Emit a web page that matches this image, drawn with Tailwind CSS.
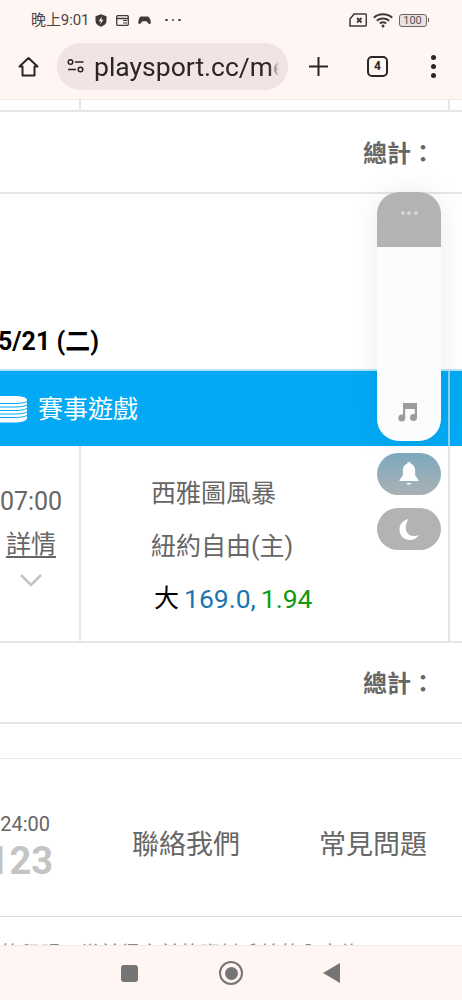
<!DOCTYPE html>
<html lang="zh-Hant">
<head>
    <meta charset="UTF-8">
    <meta name="viewport" content="width=device-width, initial-scale=1.0">
    <title>playsport.cc</title>
    <script src="https://cdn.jsdelivr.net/npm/@tailwindcss/browser@4"></script>
</head>
<body class="bg-white font-['Roboto','Noto_Sans_CJK_TC',sans-serif] text-[#666]">
<div class="relative w-[462px] h-[1000px] overflow-hidden flex flex-col">

    <!-- status bar + browser toolbar -->
    <header class="h-[100px] shrink-0 bg-[#fff5f3] border-b border-[#f0e8e6]">
        <div class="h-[40px] flex items-center pl-[31px] pr-[33px] text-[#4a4443]">
            <span class="text-[15px] tracking-[-0.1px]">晚上9:01</span>
            <svg class="ml-[6px] w-[12px] h-[13px]" viewBox="0 0 12 13"><path d="M6 .2 11.500 2.200V7c0 2.800-2.400 4.800-5.500 5.800C2.900 11.800.5 9.800.5 7V2.200Z" fill="#3f3a39"/><path d="M6.800 2.500 3.800 7.200h2l-.5 3.300 3-4.800h-2Z" fill="#fff5f3"/></svg>
            <svg class="ml-[9px] w-[13px] h-[11px]" viewBox="0 0 13 11" fill="none" stroke="#3f3a39"><rect x=".7" y=".7" width="11.600" height="9.600" rx="1" stroke-width="1.300"/><path d="M1 3.500h11" stroke-width="1.500"/><path d="M7 5.500h4M7 8h4" stroke-width="1"/></svg>
            <svg class="ml-[9px] w-[13px] h-[9px]" viewBox="0 0 13 9"><path d="M3 .5h6.500C11 .5 12.500 3 12.800 6.500c.1 1.500-1.300 2-2.200 1L8.500 5.300h-4L2.500 7.500c-1 1-2.400.3-2.200-1C.7 3 1.500.5 3 .5Z" fill="#3f3a39"/></svg>
            <span class="ml-[14px] flex gap-[4px]"><i class="w-[2.500px] h-[2.500px] rounded-full bg-[#4a4443]"></i><i class="w-[2.500px] h-[2.500px] rounded-full bg-[#4a4443]"></i><i class="w-[2.500px] h-[2.500px] rounded-full bg-[#4a4443]"></i></span>
            <svg class="ml-auto w-[18px] h-[14px]" viewBox="0 0 18 14" fill="none" stroke="#3f3a39" stroke-width="1.500"><path d="M5 1h11.500a.8.8 0 0 1 .8.8v10.400a.8.8 0 0 1-.8.8H1V6Z"/><path d="M8 5l4.500 4.500M12.500 5 8 9.500" stroke-width="1.800"/></svg>
            <svg class="ml-[6px] w-[20px] h-[15px]" viewBox="0 0 20 15" fill="none" stroke="#3f3a39" stroke-width="2"><path d="M.8 4.800C5.800.2 14.200.2 19.200 4.800"/><path d="M3.800 7.700c3.500-3 8.900-3 12.400 0"/><path d="M6.800 10.500c2-1.500 4.400-1.500 6.400 0"/><circle cx="10" cy="13" r="1.500" fill="#3f3a39" stroke="none"/></svg>
            <div class="ml-[6px] flex items-center">
                <span class="w-[28px] h-[13px] rounded-[3px] border border-[#6b6564] text-[11px] leading-[11px] text-center text-[#5a5453] bg-[#e9e2e0]">100</span>
                <i class="w-[1.500px] h-[4px] ml-px bg-[#5a5453]"></i>
            </div>
        </div>
        <div class="h-[52px] flex items-center">
            <svg class="ml-[18px] w-[21px] h-[21px]" viewBox="0 0 21 21" fill="none" stroke="#2b2524" stroke-width="2" stroke-linejoin="round"><path d="M10.500 2 1.500 10.500h3V19.500h12V10.500h3Z"/></svg>
            <div class="ml-[18px] w-[231px] h-[47px] rounded-full bg-[#f2e4e2] flex items-center pl-[10px] overflow-hidden">
                <svg class="w-[18px] h-[14px] shrink-0" viewBox="0 0 18 14" fill="none" stroke="#2b2524" stroke-width="1.500"><circle cx="3.500" cy="3" r="2.300"/><path d="M8 3h8.500M1 10.500h8"/><circle cx="13.500" cy="10.500" r="2.300"/></svg>
                <div class="ml-[9px] w-[185px] overflow-hidden whitespace-nowrap text-[26.5px] text-[#2b2524] leading-[47px] [mask-image:linear-gradient(to_left,transparent,black_10px)]">playsport.cc/member</div>
            </div>
            <svg class="ml-[21px] w-[19px] h-[19px]" viewBox="0 0 19 19" stroke="#2b2524" stroke-width="2"><path d="M9.500 0v19M0 9.500h19"/></svg>
            <div class="ml-[39px] w-[21px] h-[21px] rounded-[5px] border-2 border-[#2b2524] text-[#2b2524] text-[12px] font-bold leading-[17px] text-center">4</div>
            <div class="ml-[43px] flex flex-col gap-[4px]"><i class="w-[5px] h-[5px] rounded-full bg-[#2b2524]"></i><i class="w-[5px] h-[5px] rounded-full bg-[#2b2524]"></i><i class="w-[5px] h-[5px] rounded-full bg-[#2b2524]"></i></div>
        </div>
    </header>

    <!-- end of previous table row -->
    <div class="h-[12px] shrink-0 flex border-b-2 border-[#e6e6e6]">
        <div class="w-[81px] border-r-2 border-[#e6e6e6]"></div>
        <div class="w-[369px] border-r-2 border-[#e6e6e6]"></div>
    </div>

    <div class="h-[82px] shrink-0 flex items-center justify-end pr-[27px] pt-[4px] border-b-2 border-[#e6e6e6] text-[24px] font-bold text-[#666]">總計：</div>

    <div class="h-[175px] shrink-0 flex items-end pb-[13px] text-[25px] font-bold text-black leading-[28px]"><span class="-ml-[2px]">5/21 (二)</span></div>

    <div class="relative h-[77px] shrink-0 flex items-center bg-[#03a9f4] border-t-2 border-[#b5e3f8] text-white text-[25px]">
        <svg class="w-[27px] h-[28px] shrink-0" viewBox="0 0 27 28"><path d="M0 1h14c7 0 13 1.200 13 4v18c0 3-6 4.500-13 4.500H0Z" fill="white"/><path d="M0 8.500h15c5 0 9.500-.6 12-2M0 12h15c5 0 9.500-.6 12-2M0 15.500h15c5 0 9.500-.6 12-2M0 19h15c5 0 9.500-.6 12-2M0 22.500h15c5 0 9.500-.6 12-2" fill="none" stroke="#03a9f4" stroke-width="1"/></svg>
        <span class="ml-[11px] mt-[2px]">賽事遊戲</span>
        <i class="absolute left-[448px] top-0 bottom-0 w-[2px] bg-[#8fd2f0]"></i>
    </div>

    <!-- match row -->
    <div class="h-[197px] shrink-0 flex border-b-2 border-[#e6e6e6]">
        <div class="w-[81px] shrink-0 border-r-2 border-[#e6e6e6] pt-[42px]">
            <div class="w-[62px] flex flex-col items-center">
                <span class="text-[25px] leading-[28px] whitespace-nowrap">07:00</span>
                <a class="mt-[14px] text-[25px] leading-[30px] underline underline-offset-[3px]">詳情</a>
                <svg class="mt-[14px] w-[22px] h-[13px]" viewBox="0 0 22 13" fill="none" stroke="#c4c4c4" stroke-width="2.500"><path d="M1 1l10 10L21 1"/></svg>
            </div>
        </div>
        <div class="w-[369px] shrink-0 border-r-2 border-[#e6e6e6] pl-[70px] pt-[31px] text-[25px] leading-[34px]">
            <div>西雅圖風暴</div>
            <div class="mt-[19px]">紐約自由(主)</div>
            <div class="mt-[18px] pl-[3px] flex text-[26.500px]"><span class="text-black text-[25px]">大</span><span class="ml-[5px] text-[#1a75b0]">169.0,</span><span class="ml-[5px] text-[#119a11]">1.94</span></div>
        </div>
    </div>

    <div class="h-[81px] shrink-0 flex items-center justify-end pr-[27px] pt-[2px] border-b-2 border-[#e6e6e6] text-[24px] font-bold">總計：</div>

    <div class="h-[35px] shrink-0 border-b border-[#e6e6e6]"></div>

    <!-- footer -->
    <div class="h-[158px] shrink-0 flex items-center pt-[16px] border-b border-[#dcdcdc]">
        <div class="w-[53px] shrink-0 flex flex-col items-end pt-[5px]">
            <span class="pr-[3px] text-[20px] leading-[24px] text-[#666] whitespace-nowrap">24:00</span>
            <span class="mt-[2px] text-[38px] leading-[46px] font-bold text-[#c4c4c4] whitespace-nowrap">123</span>
        </div>
        <span class="ml-[79px] text-[27px] text-[#666]">聯絡我們</span>
        <span class="ml-[79px] text-[27px] text-[#666]">常見問題</span>
    </div>

    <div class="flex-1 pt-[25px] text-[20px] leading-[24px] whitespace-nowrap text-[#888]">的程明，當前得之前的資料系統的內容修</div>

    <!-- floating music player -->
    <div class="absolute left-[377px] top-[192px] w-[64px] h-[249px] rounded-[22px] bg-[#fafcfe] shadow-[0_0_30px_rgba(0,0,0,0.08)] overflow-hidden">
        <div class="h-[55px] bg-[#b3b3b3] flex justify-center gap-[2.500px] pt-[19px]">
            <i class="w-[4px] h-[4px] rounded-full bg-[#d6d6d6]"></i><i class="w-[4px] h-[4px] rounded-full bg-[#d6d6d6]"></i><i class="w-[4px] h-[4px] rounded-full bg-[#d6d6d6]"></i>
        </div>
        <svg class="absolute left-[21px] top-[210px] w-[20px] h-[20px]" viewBox="0 0 20 20" fill="#9c9c9c"><path d="M5 1h14v14h-2.200V7H7.200v9H5Z"/><circle cx="3.800" cy="16" r="3.500"/><circle cx="15.500" cy="15.500" r="3.500"/></svg>
    </div>
    <div class="absolute left-[377px] top-[453px] w-[64px] h-[42px] rounded-[21px] bg-gradient-to-b from-[#7ba9bd] to-[#a9b1b4] flex items-center justify-center">
        <svg class="w-[20px] h-[24px]" viewBox="0 0 20 24" fill="white"><path d="M10 0c1 0 1.800.8 1.800 1.800C15 2.700 16.200 5.500 16.200 9v4.500L19.500 18v1H.5v-1l3.300-4.500V9C3.800 5.500 5 2.700 8.200 1.800 8.200.8 9 0 10 0Z"/><path d="M7.500 21h5c-.5 2-4.500 2-5 0Z"/></svg>
    </div>
    <div class="absolute left-[377px] top-[508px] w-[64px] h-[42px] rounded-[21px] bg-[#b3b3b3] flex items-center justify-center">
        <svg class="w-[20px] h-[21px]" viewBox="0 0 20 21" fill="white"><path d="M9.500 0C5 1 .5 4.500.5 10.500.5 16.500 5 21 11 21c4 0 7.300-2.200 9-5.500-1.500 1-3 1.500-5 1.500C10 17 6.800 13.500 6.800 9 6.800 5.500 7.800 2.500 9.500 0Z"/></svg>
    </div>

    <!-- navigation bar -->
    <nav class="absolute left-0 right-0 bottom-0 h-[55px] bg-[#fff5f3] border-t border-[#f2e8e6] flex items-center">
        <i class="ml-[121px] w-[17px] h-[17px] rounded-[3px] bg-[#757575]"></i>
        <span class="ml-[81px] w-[24px] h-[24px] rounded-full border-2 border-[#757575] flex items-center justify-center"><i class="w-[13px] h-[13px] rounded-full bg-[#757575]"></i></span>
        <svg class="ml-[80px] w-[17px] h-[20px]" viewBox="0 0 17 20" fill="#757575"><path d="M17 0v20L0 10Z"/></svg>
    </nav>
</div>
</body>
</html>
